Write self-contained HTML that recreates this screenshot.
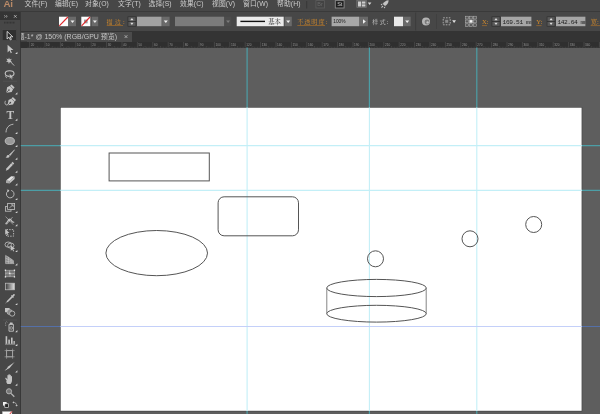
<!DOCTYPE html>
<html lang="zh-CN">
<head>
<meta charset="utf-8">
<title>Adobe Illustrator</title>
<style>
html,body{margin:0;padding:0;}
body{width:600px;height:414px;overflow:hidden;position:relative;background:#5e5e5e;
 font-family:"Liberation Sans","Noto Sans CJK SC",sans-serif;color:#d0d0d0;}
.abs{position:absolute;}
#menubar{left:0;top:0;width:600px;height:12px;background:#474747;will-change:transform;}
#menubar .mi{position:absolute;top:-1px;height:11px;line-height:10px;font-size:6.8px;color:#cdcdcd;white-space:nowrap;letter-spacing:0.1px;}
#menuline{left:0;top:11px;width:600px;height:1.3px;background:#3a3a3a;}
#ctrl{left:20px;top:12px;width:580px;height:19.5px;background:#474747;}
#tools{left:0;top:12px;width:20px;height:402px;background:#474747;}
#toolhead{left:0;top:12px;width:20px;height:7.5px;background:#343434;}
#toolsep{left:19.6px;top:12px;width:1.2px;height:402px;background:#383838;}
#tabbar{left:20.5px;top:31px;width:579.5px;height:10.5px;background:#343434;}
#tab{left:20.5px;top:31.7px;width:110.8px;height:9.5px;background:#4b4b4b;overflow:hidden;will-change:transform;}
#tab span{position:absolute;left:-3.5px;top:-0.3px;font-size:7px;line-height:10px;color:#c4c4c4;white-space:nowrap;}
#ruler{left:20.5px;top:41.6px;width:579.5px;height:6.1px;background:#2f2f2f;}
svg{position:absolute;left:0;top:0;will-change:transform;}
</style>
</head>
<body>
<div id="menubar" class="abs">
 <span class="mi" style="left:24.5px">文件(F)</span>
 <span class="mi" style="left:55px">编辑(E)</span>
 <span class="mi" style="left:85px">对象(O)</span>
 <span class="mi" style="left:118px">文字(T)</span>
 <span class="mi" style="left:148.5px">选择(S)</span>
 <span class="mi" style="left:180px">效果(C)</span>
 <span class="mi" style="left:212px">视图(V)</span>
 <span class="mi" style="left:243px">窗口(W)</span>
 <span class="mi" style="left:277px">帮助(H)</span>
 <span class="abs" style="left:3.4px;top:-1.6px;font-size:9.8px;line-height:11px;font-weight:bold;color:#b98a68;letter-spacing:-0.2px">Ai</span>
</div>
<div id="menuline" class="abs"></div>
<div id="ctrl" class="abs"></div>
<div id="tools" class="abs"></div>
<div id="toolhead" class="abs"></div>
<div id="toolsep" class="abs"></div>
<div id="tabbar" class="abs"></div>
<div id="tab" class="abs"><span>题-1* @ 150% (RGB/GPU 预览)</span></div>
<div id="ruler" class="abs"></div>
<svg id="ctrlsvg" width="600" height="48" viewBox="0 0 600 48" font-family="'Liberation Sans','Noto Sans CJK SC',sans-serif">
<line x1="306.7" y1="1" x2="306.7" y2="8.5" stroke="#383838" stroke-width="1"/>
<rect x="315.9" y="0.6" width="8.6" height="7.4" fill="#434343" stroke="#5e5e5e" stroke-width="0.8"/><text x="317.3" y="6.3" font-size="5.5" fill="#6a6a6a">Br</text>
<rect x="335.3" y="0.6" width="8.8" height="7.4" fill="#1f1f1f" stroke="#8c8c8c" stroke-width="0.9"/><text x="337.2" y="6.3" font-size="5.5" fill="#cfcfcf">St</text>
<rect x="356.8" y="0.4" width="9.6" height="7.2" fill="#5a5a5a" stroke="#7a7a7a" stroke-width="0.6"/><rect x="358" y="1.5" width="3.2" height="5" fill="#cdcdcd"/><rect x="362" y="1.5" width="3.4" height="2.1" fill="#cdcdcd"/><rect x="362" y="4.4" width="3.4" height="2.1" fill="#cdcdcd"/>
<path d="M367.8 2.6h3.6l-1.8 2.4z" fill="#d8d8d8"/>
<g fill="#c4c4c4"><path d="M388.6 0.2c-2.6 0.2-4.6 1.6-5.8 3.8l2.2 2.1c2.2-1.2 3.5-3.2 3.6-5.9z"/><path d="M382.6 3.6l-2 0.6 1.2 1.2z"/><path d="M385.4 6.4l-0.5 2 -1.3-1.2z"/><path d="M382.2 5.6l1.2 1.2-2.4 1.4z"/></g>
<rect x="59" y="16.7" width="9.2" height="9.5" fill="#fdfdfd"/><line x1="59.3" y1="25.9" x2="67.9" y2="17" stroke="#e0262a" stroke-width="1.1"/>
<rect x="69" y="16.7" width="7" height="9.5" fill="#6a6a6a"/><path d="M70.5 20.4h4l-2 2.6z" fill="#f0f0f0"/>
<rect x="81.3" y="16.7" width="9" height="9.5" fill="#fdfdfd"/><rect x="84" y="19.6" width="3.6" height="3.7" fill="#9a9a9a"/><line x1="81.6" y1="25.9" x2="90" y2="17" stroke="#e0262a" stroke-width="1.1"/>
<rect x="91.6" y="16.7" width="6.6" height="9.5" fill="#6a6a6a"/><path d="M92.9 20.4h4l-2 2.6z" fill="#f0f0f0"/>
<text x="106.5" y="24" font-size="6.1" fill="#d28a2c" font-family="'Liberation Serif','Noto Serif CJK SC',serif" textLength="18.2" lengthAdjust="spacing">描边:</text>
<line x1="106.7" y1="25.5" x2="123" y2="25.5" stroke="#b87624" stroke-width="0.6"/>
<rect x="127.6" y="16.5" width="8.7" height="10" fill="#2e2e2e"/><rect x="128.3" y="17.1" width="7.3" height="4" fill="#595959"/><rect x="128.3" y="21.9" width="7.3" height="4" fill="#595959"/><path d="M130.3 20.2h3.2l-1.6-2.2z" fill="#e0e0e0"/><path d="M130.3 22.8h3.2l-1.6 2.2z" fill="#e0e0e0"/>
<rect x="137" y="16.7" width="24.6" height="9.5" fill="#a2a2a2"/>
<rect x="162.1" y="16.7" width="7.5" height="9.5" fill="#6a6a6a"/><path d="M163.8 20.4h4l-2 2.6z" fill="#f0f0f0"/>
<rect x="175" y="16.7" width="49.2" height="9.5" fill="#7b7b7b"/>
<rect x="224.8" y="16.7" width="6.6" height="9.5" fill="#4c4c4c"/><path d="M226.1 20.4h4l-2 2.6z" fill="#7c7c7c"/>
<rect x="236.7" y="16.7" width="47" height="9.5" fill="#ebebeb"/><line x1="240.4" y1="21.4" x2="265" y2="21.4" stroke="#111" stroke-width="1.4"/><text x="268.2" y="23.9" font-size="6.4" fill="#333" font-family="'Liberation Serif','Noto Serif CJK SC',serif">基本</text>
<rect x="284.6" y="16.7" width="7.2" height="9.5" fill="#6a6a6a"/><path d="M286.2 20.4h4l-2 2.6z" fill="#f0f0f0"/>
<text x="297.2" y="24" font-size="6.2" fill="#d28a2c" font-family="'Liberation Serif','Noto Serif CJK SC',serif" textLength="30" lengthAdjust="spacing">不透明度:</text>
<line x1="297.3" y1="25.5" x2="325" y2="25.5" stroke="#b87624" stroke-width="0.6"/>
<rect x="331.6" y="16.7" width="27.8" height="9.5" fill="#a8a8a8"/><text x="333.2" y="23.3" font-size="6.2" fill="#222" textLength="12.4" lengthAdjust="spacingAndGlyphs">100%</text>
<rect x="360" y="16.7" width="8" height="9.5" fill="#6a6a6a"/><path d="M363 19.3v4.4l2.8-2.2z" fill="#f0f0f0"/>
<text x="372" y="24" font-size="6.2" fill="#c8c8c8" font-family="'Liberation Serif','Noto Serif CJK SC',serif" textLength="16.5" lengthAdjust="spacing">样式:</text>
<rect x="394" y="16.7" width="9.2" height="9.5" fill="#e8e8e8"/>
<rect x="403.7" y="16.7" width="7" height="9.5" fill="#6a6a6a"/><path d="M405.2 20.4h4l-2 2.6z" fill="#f0f0f0"/>
<line x1="415.6" y1="12.5" x2="415.6" y2="30.5" stroke="#3c3c3c" stroke-width="0.9"/>
<circle cx="426" cy="21.4" r="4" fill="#b4b4b4"/><circle cx="427" cy="22" r="2.4" fill="#7a7a7a"/><circle cx="427.6" cy="22.4" r="1.2" fill="#c0c0c0"/>
<line x1="436.5" y1="14" x2="436.5" y2="29" stroke="#3f3f3f" stroke-width="0.8"/>
<rect x="443.2" y="17.8" width="7" height="7" fill="#4a4a4a" stroke="#b4b4b4" stroke-width="0.9" stroke-dasharray="1.6 1.2"/><rect x="445.2" y="19.8" width="3" height="3" fill="#8a8a8a"/><path d="M452.2 20.3h3.8l-1.9 2.6z" fill="#e0e0e0"/>
<rect x="465.3" y="16" width="11.4" height="10.7" fill="#505050"/><rect x="465.4" y="16.2" width="3" height="2.8" fill="#5a5a5a" stroke="#b8b8b8" stroke-width="0.5"/><rect x="465.4" y="20.0" width="3" height="2.8" fill="#5a5a5a" stroke="#b8b8b8" stroke-width="0.5"/><rect x="465.4" y="23.8" width="3" height="2.8" fill="#5a5a5a" stroke="#b8b8b8" stroke-width="0.5"/><rect x="469.5" y="16.2" width="3" height="2.8" fill="#5a5a5a" stroke="#b8b8b8" stroke-width="0.5"/><rect x="469.5" y="20.0" width="3" height="2.8" fill="#f4f4f4" stroke="#b8b8b8" stroke-width="0.5"/><rect x="469.5" y="23.8" width="3" height="2.8" fill="#5a5a5a" stroke="#b8b8b8" stroke-width="0.5"/><rect x="473.6" y="16.2" width="3" height="2.8" fill="#5a5a5a" stroke="#b8b8b8" stroke-width="0.5"/><rect x="473.6" y="20.0" width="3" height="2.8" fill="#5a5a5a" stroke="#b8b8b8" stroke-width="0.5"/><rect x="473.6" y="23.8" width="3" height="2.8" fill="#5a5a5a" stroke="#b8b8b8" stroke-width="0.5"/>
<text x="482" y="24.3" font-size="6.6" fill="#d28a2c" font-family="'Liberation Serif','Noto Serif CJK SC',serif">X:</text><line x1="482" y1="25.6" x2="487" y2="25.6" stroke="#b87624" stroke-width="0.6"/>
<rect x="491.6" y="16.5" width="8.8" height="10" fill="#2e2e2e"/><rect x="492.3" y="17.1" width="7.4" height="4" fill="#595959"/><rect x="492.3" y="21.9" width="7.4" height="4" fill="#595959"/><path d="M494.4 20.2h3.2l-1.6-2.2z" fill="#e0e0e0"/><path d="M494.4 22.8h3.2l-1.6 2.2z" fill="#e0e0e0"/>
<rect x="501" y="16.7" width="30.4" height="9.5" fill="#a6a6a6"/><svg x="501" y="16.7" width="30.4" height="9.5" style="will-change:auto;position:static"><text x="1.6" y="6.9" font-size="6.2" fill="#1c1c1c" font-family="'Liberation Mono',monospace" textLength="30.6" lengthAdjust="spacing">169.51 mm</text></svg>
<text x="536.3" y="24.3" font-size="6.6" fill="#d28a2c" font-family="'Liberation Serif','Noto Serif CJK SC',serif">Y:</text><line x1="536.3" y1="25.6" x2="541.5" y2="25.6" stroke="#b87624" stroke-width="0.6"/>
<rect x="546.7" y="16.5" width="8.7" height="10" fill="#2e2e2e"/><rect x="547.4" y="17.1" width="7.3" height="4" fill="#595959"/><rect x="547.4" y="21.9" width="7.3" height="4" fill="#595959"/><path d="M549.5 20.2h3.2l-1.6-2.2z" fill="#e0e0e0"/><path d="M549.5 22.8h3.2l-1.6 2.2z" fill="#e0e0e0"/>
<rect x="556" y="16.7" width="29.4" height="9.5" fill="#a6a6a6"/><svg x="556" y="16.7" width="29.4" height="9.5" style="will-change:auto;position:static"><text x="1.4" y="6.9" font-size="6.2" fill="#1c1c1c" font-family="'Liberation Mono',monospace" textLength="30.2" lengthAdjust="spacing">142.64 mm</text></svg>
<text x="590.7" y="24" font-size="6.4" fill="#d28a2c" font-family="'Liberation Serif','Noto Serif CJK SC',serif">宽:</text><line x1="590.7" y1="25.6" x2="600" y2="25.6" stroke="#b87624" stroke-width="0.6"/>
<path d="M124.6 35.2l2.8 2.8M127.4 35.2l-2.8 2.8" stroke="#c8c8c8" stroke-width="0.7"/>
<path d="M4.2 15.3l1.3 1.1-1.3 1.1M6 15.3l1.3 1.1-1.3 1.1" stroke="#c8c8c8" stroke-width="0.6" fill="none"/><path d="M14 15.1l2.6 2.6M16.6 15.1l-2.6 2.6" stroke="#d0d0d0" stroke-width="0.7"/>
<line x1="4" y1="22.6" x2="15" y2="22.6" stroke="#353535" stroke-width="1.6" stroke-dasharray="1 0.5"/>
<path d="M29.6 42v5.7M45.0 42v5.7M60.4 42v5.7M75.8 42v5.7M91.2 42v5.7M106.6 42v5.7M122.0 42v5.7M137.4 42v5.7M152.8 42v5.7M168.2 42v5.7M183.6 42v5.7M199.0 42v5.7M214.4 42v5.7M229.8 42v5.7M245.2 42v5.7M260.6 42v5.7M276.0 42v5.7M291.4 42v5.7M306.8 42v5.7M322.2 42v5.7M337.6 42v5.7M353.0 42v5.7M368.4 42v5.7M383.8 42v5.7M399.2 42v5.7M414.6 42v5.7M430.0 42v5.7M445.4 42v5.7M460.8 42v5.7M476.2 42v5.7M491.6 42v5.7M507.0 42v5.7M522.4 42v5.7M537.8 42v5.7M553.2 42v5.7M568.6 42v5.7M584.0 42v5.7M599.4 42v5.7" stroke="#5c5c5c" stroke-width="0.5" fill="none"/><path d="M28.06 46.800000000000004v0.9M31.14 46.800000000000004v0.9M32.68 46.800000000000004v0.9M34.22 46.800000000000004v0.9M35.76 46.800000000000004v0.9M37.30 46.2v1.5M38.84 46.800000000000004v0.9M40.38 46.800000000000004v0.9M41.92 46.800000000000004v0.9M43.46 46.800000000000004v0.9M46.54 46.800000000000004v0.9M48.08 46.800000000000004v0.9M49.62 46.800000000000004v0.9M51.16 46.800000000000004v0.9M52.70 46.2v1.5M54.24 46.800000000000004v0.9M55.78 46.800000000000004v0.9M57.32 46.800000000000004v0.9M58.86 46.800000000000004v0.9M61.94 46.800000000000004v0.9M63.48 46.800000000000004v0.9M65.02 46.800000000000004v0.9M66.56 46.800000000000004v0.9M68.10 46.2v1.5M69.64 46.800000000000004v0.9M71.18 46.800000000000004v0.9M72.72 46.800000000000004v0.9M74.26 46.800000000000004v0.9M77.34 46.800000000000004v0.9M78.88 46.800000000000004v0.9M80.42 46.800000000000004v0.9M81.96 46.800000000000004v0.9M83.50 46.2v1.5M85.04 46.800000000000004v0.9M86.58 46.800000000000004v0.9M88.12 46.800000000000004v0.9M89.66 46.800000000000004v0.9M92.74 46.800000000000004v0.9M94.28 46.800000000000004v0.9M95.82 46.800000000000004v0.9M97.36 46.800000000000004v0.9M98.90 46.2v1.5M100.44 46.800000000000004v0.9M101.98 46.800000000000004v0.9M103.52 46.800000000000004v0.9M105.06 46.800000000000004v0.9M108.14 46.800000000000004v0.9M109.68 46.800000000000004v0.9M111.22 46.800000000000004v0.9M112.76 46.800000000000004v0.9M114.30 46.2v1.5M115.84 46.800000000000004v0.9M117.38 46.800000000000004v0.9M118.92 46.800000000000004v0.9M120.46 46.800000000000004v0.9M123.54 46.800000000000004v0.9M125.08 46.800000000000004v0.9M126.62 46.800000000000004v0.9M128.16 46.800000000000004v0.9M129.70 46.2v1.5M131.24 46.800000000000004v0.9M132.78 46.800000000000004v0.9M134.32 46.800000000000004v0.9M135.86 46.800000000000004v0.9M138.94 46.800000000000004v0.9M140.48 46.800000000000004v0.9M142.02 46.800000000000004v0.9M143.56 46.800000000000004v0.9M145.10 46.2v1.5M146.64 46.800000000000004v0.9M148.18 46.800000000000004v0.9M149.72 46.800000000000004v0.9M151.26 46.800000000000004v0.9M154.34 46.800000000000004v0.9M155.88 46.800000000000004v0.9M157.42 46.800000000000004v0.9M158.96 46.800000000000004v0.9M160.50 46.2v1.5M162.04 46.800000000000004v0.9M163.58 46.800000000000004v0.9M165.12 46.800000000000004v0.9M166.66 46.800000000000004v0.9M169.74 46.800000000000004v0.9M171.28 46.800000000000004v0.9M172.82 46.800000000000004v0.9M174.36 46.800000000000004v0.9M175.90 46.2v1.5M177.44 46.800000000000004v0.9M178.98 46.800000000000004v0.9M180.52 46.800000000000004v0.9M182.06 46.800000000000004v0.9M185.14 46.800000000000004v0.9M186.68 46.800000000000004v0.9M188.22 46.800000000000004v0.9M189.76 46.800000000000004v0.9M191.30 46.2v1.5M192.84 46.800000000000004v0.9M194.38 46.800000000000004v0.9M195.92 46.800000000000004v0.9M197.46 46.800000000000004v0.9M200.54 46.800000000000004v0.9M202.08 46.800000000000004v0.9M203.62 46.800000000000004v0.9M205.16 46.800000000000004v0.9M206.70 46.2v1.5M208.24 46.800000000000004v0.9M209.78 46.800000000000004v0.9M211.32 46.800000000000004v0.9M212.86 46.800000000000004v0.9M215.94 46.800000000000004v0.9M217.48 46.800000000000004v0.9M219.02 46.800000000000004v0.9M220.56 46.800000000000004v0.9M222.10 46.2v1.5M223.64 46.800000000000004v0.9M225.18 46.800000000000004v0.9M226.72 46.800000000000004v0.9M228.26 46.800000000000004v0.9M231.34 46.800000000000004v0.9M232.88 46.800000000000004v0.9M234.42 46.800000000000004v0.9M235.96 46.800000000000004v0.9M237.50 46.2v1.5M239.04 46.800000000000004v0.9M240.58 46.800000000000004v0.9M242.12 46.800000000000004v0.9M243.66 46.800000000000004v0.9M246.74 46.800000000000004v0.9M248.28 46.800000000000004v0.9M249.82 46.800000000000004v0.9M251.36 46.800000000000004v0.9M252.90 46.2v1.5M254.44 46.800000000000004v0.9M255.98 46.800000000000004v0.9M257.52 46.800000000000004v0.9M259.06 46.800000000000004v0.9M262.14 46.800000000000004v0.9M263.68 46.800000000000004v0.9M265.22 46.800000000000004v0.9M266.76 46.800000000000004v0.9M268.30 46.2v1.5M269.84 46.800000000000004v0.9M271.38 46.800000000000004v0.9M272.92 46.800000000000004v0.9M274.46 46.800000000000004v0.9M277.54 46.800000000000004v0.9M279.08 46.800000000000004v0.9M280.62 46.800000000000004v0.9M282.16 46.800000000000004v0.9M283.70 46.2v1.5M285.24 46.800000000000004v0.9M286.78 46.800000000000004v0.9M288.32 46.800000000000004v0.9M289.86 46.800000000000004v0.9M292.94 46.800000000000004v0.9M294.48 46.800000000000004v0.9M296.02 46.800000000000004v0.9M297.56 46.800000000000004v0.9M299.10 46.2v1.5M300.64 46.800000000000004v0.9M302.18 46.800000000000004v0.9M303.72 46.800000000000004v0.9M305.26 46.800000000000004v0.9M308.34 46.800000000000004v0.9M309.88 46.800000000000004v0.9M311.42 46.800000000000004v0.9M312.96 46.800000000000004v0.9M314.50 46.2v1.5M316.04 46.800000000000004v0.9M317.58 46.800000000000004v0.9M319.12 46.800000000000004v0.9M320.66 46.800000000000004v0.9M323.74 46.800000000000004v0.9M325.28 46.800000000000004v0.9M326.82 46.800000000000004v0.9M328.36 46.800000000000004v0.9M329.90 46.2v1.5M331.44 46.800000000000004v0.9M332.98 46.800000000000004v0.9M334.52 46.800000000000004v0.9M336.06 46.800000000000004v0.9M339.14 46.800000000000004v0.9M340.68 46.800000000000004v0.9M342.22 46.800000000000004v0.9M343.76 46.800000000000004v0.9M345.30 46.2v1.5M346.84 46.800000000000004v0.9M348.38 46.800000000000004v0.9M349.92 46.800000000000004v0.9M351.46 46.800000000000004v0.9M354.54 46.800000000000004v0.9M356.08 46.800000000000004v0.9M357.62 46.800000000000004v0.9M359.16 46.800000000000004v0.9M360.70 46.2v1.5M362.24 46.800000000000004v0.9M363.78 46.800000000000004v0.9M365.32 46.800000000000004v0.9M366.86 46.800000000000004v0.9M369.94 46.800000000000004v0.9M371.48 46.800000000000004v0.9M373.02 46.800000000000004v0.9M374.56 46.800000000000004v0.9M376.10 46.2v1.5M377.64 46.800000000000004v0.9M379.18 46.800000000000004v0.9M380.72 46.800000000000004v0.9M382.26 46.800000000000004v0.9M385.34 46.800000000000004v0.9M386.88 46.800000000000004v0.9M388.42 46.800000000000004v0.9M389.96 46.800000000000004v0.9M391.50 46.2v1.5M393.04 46.800000000000004v0.9M394.58 46.800000000000004v0.9M396.12 46.800000000000004v0.9M397.66 46.800000000000004v0.9M400.74 46.800000000000004v0.9M402.28 46.800000000000004v0.9M403.82 46.800000000000004v0.9M405.36 46.800000000000004v0.9M406.90 46.2v1.5M408.44 46.800000000000004v0.9M409.98 46.800000000000004v0.9M411.52 46.800000000000004v0.9M413.06 46.800000000000004v0.9M416.14 46.800000000000004v0.9M417.68 46.800000000000004v0.9M419.22 46.800000000000004v0.9M420.76 46.800000000000004v0.9M422.30 46.2v1.5M423.84 46.800000000000004v0.9M425.38 46.800000000000004v0.9M426.92 46.800000000000004v0.9M428.46 46.800000000000004v0.9M431.54 46.800000000000004v0.9M433.08 46.800000000000004v0.9M434.62 46.800000000000004v0.9M436.16 46.800000000000004v0.9M437.70 46.2v1.5M439.24 46.800000000000004v0.9M440.78 46.800000000000004v0.9M442.32 46.800000000000004v0.9M443.86 46.800000000000004v0.9M446.94 46.800000000000004v0.9M448.48 46.800000000000004v0.9M450.02 46.800000000000004v0.9M451.56 46.800000000000004v0.9M453.10 46.2v1.5M454.64 46.800000000000004v0.9M456.18 46.800000000000004v0.9M457.72 46.800000000000004v0.9M459.26 46.800000000000004v0.9M462.34 46.800000000000004v0.9M463.88 46.800000000000004v0.9M465.42 46.800000000000004v0.9M466.96 46.800000000000004v0.9M468.50 46.2v1.5M470.04 46.800000000000004v0.9M471.58 46.800000000000004v0.9M473.12 46.800000000000004v0.9M474.66 46.800000000000004v0.9M477.74 46.800000000000004v0.9M479.28 46.800000000000004v0.9M480.82 46.800000000000004v0.9M482.36 46.800000000000004v0.9M483.90 46.2v1.5M485.44 46.800000000000004v0.9M486.98 46.800000000000004v0.9M488.52 46.800000000000004v0.9M490.06 46.800000000000004v0.9M493.14 46.800000000000004v0.9M494.68 46.800000000000004v0.9M496.22 46.800000000000004v0.9M497.76 46.800000000000004v0.9M499.30 46.2v1.5M500.84 46.800000000000004v0.9M502.38 46.800000000000004v0.9M503.92 46.800000000000004v0.9M505.46 46.800000000000004v0.9M508.54 46.800000000000004v0.9M510.08 46.800000000000004v0.9M511.62 46.800000000000004v0.9M513.16 46.800000000000004v0.9M514.70 46.2v1.5M516.24 46.800000000000004v0.9M517.78 46.800000000000004v0.9M519.32 46.800000000000004v0.9M520.86 46.800000000000004v0.9M523.94 46.800000000000004v0.9M525.48 46.800000000000004v0.9M527.02 46.800000000000004v0.9M528.56 46.800000000000004v0.9M530.10 46.2v1.5M531.64 46.800000000000004v0.9M533.18 46.800000000000004v0.9M534.72 46.800000000000004v0.9M536.26 46.800000000000004v0.9M539.34 46.800000000000004v0.9M540.88 46.800000000000004v0.9M542.42 46.800000000000004v0.9M543.96 46.800000000000004v0.9M545.50 46.2v1.5M547.04 46.800000000000004v0.9M548.58 46.800000000000004v0.9M550.12 46.800000000000004v0.9M551.66 46.800000000000004v0.9M554.74 46.800000000000004v0.9M556.28 46.800000000000004v0.9M557.82 46.800000000000004v0.9M559.36 46.800000000000004v0.9M560.90 46.2v1.5M562.44 46.800000000000004v0.9M563.98 46.800000000000004v0.9M565.52 46.800000000000004v0.9M567.06 46.800000000000004v0.9M570.14 46.800000000000004v0.9M571.68 46.800000000000004v0.9M573.22 46.800000000000004v0.9M574.76 46.800000000000004v0.9M576.30 46.2v1.5M577.84 46.800000000000004v0.9M579.38 46.800000000000004v0.9M580.92 46.800000000000004v0.9M582.46 46.800000000000004v0.9M585.54 46.800000000000004v0.9M587.08 46.800000000000004v0.9M588.62 46.800000000000004v0.9M590.16 46.800000000000004v0.9M591.70 46.2v1.5M593.24 46.800000000000004v0.9M594.78 46.800000000000004v0.9M596.32 46.800000000000004v0.9M597.86 46.800000000000004v0.9" stroke="#5a5a5a" stroke-width="0.5" fill="none"/><text x="30.7" y="46.1" font-size="4" fill="#949494" textLength="3.50" lengthAdjust="spacingAndGlyphs">20</text><text x="46.1" y="46.1" font-size="4" fill="#949494" textLength="3.50" lengthAdjust="spacingAndGlyphs">10</text><text x="61.5" y="46.1" font-size="4" fill="#949494" textLength="1.75" lengthAdjust="spacingAndGlyphs">0</text><text x="76.9" y="46.1" font-size="4" fill="#949494" textLength="3.50" lengthAdjust="spacingAndGlyphs">10</text><text x="92.3" y="46.1" font-size="4" fill="#949494" textLength="3.50" lengthAdjust="spacingAndGlyphs">20</text><text x="107.7" y="46.1" font-size="4" fill="#949494" textLength="3.50" lengthAdjust="spacingAndGlyphs">30</text><text x="123.1" y="46.1" font-size="4" fill="#949494" textLength="3.50" lengthAdjust="spacingAndGlyphs">40</text><text x="138.5" y="46.1" font-size="4" fill="#949494" textLength="3.50" lengthAdjust="spacingAndGlyphs">50</text><text x="153.9" y="46.1" font-size="4" fill="#949494" textLength="3.50" lengthAdjust="spacingAndGlyphs">60</text><text x="169.3" y="46.1" font-size="4" fill="#949494" textLength="3.50" lengthAdjust="spacingAndGlyphs">70</text><text x="184.7" y="46.1" font-size="4" fill="#949494" textLength="3.50" lengthAdjust="spacingAndGlyphs">80</text><text x="200.1" y="46.1" font-size="4" fill="#949494" textLength="3.50" lengthAdjust="spacingAndGlyphs">90</text><text x="215.5" y="46.1" font-size="4" fill="#949494" textLength="5.25" lengthAdjust="spacingAndGlyphs">100</text><text x="230.9" y="46.1" font-size="4" fill="#949494" textLength="5.25" lengthAdjust="spacingAndGlyphs">110</text><text x="246.3" y="46.1" font-size="4" fill="#949494" textLength="5.25" lengthAdjust="spacingAndGlyphs">120</text><text x="261.7" y="46.1" font-size="4" fill="#949494" textLength="5.25" lengthAdjust="spacingAndGlyphs">130</text><text x="277.1" y="46.1" font-size="4" fill="#949494" textLength="5.25" lengthAdjust="spacingAndGlyphs">140</text><text x="292.5" y="46.1" font-size="4" fill="#949494" textLength="5.25" lengthAdjust="spacingAndGlyphs">150</text><text x="307.9" y="46.1" font-size="4" fill="#949494" textLength="5.25" lengthAdjust="spacingAndGlyphs">160</text><text x="323.3" y="46.1" font-size="4" fill="#949494" textLength="5.25" lengthAdjust="spacingAndGlyphs">170</text><text x="338.7" y="46.1" font-size="4" fill="#949494" textLength="5.25" lengthAdjust="spacingAndGlyphs">180</text><text x="354.1" y="46.1" font-size="4" fill="#949494" textLength="5.25" lengthAdjust="spacingAndGlyphs">190</text><text x="369.5" y="46.1" font-size="4" fill="#949494" textLength="5.25" lengthAdjust="spacingAndGlyphs">200</text><text x="384.9" y="46.1" font-size="4" fill="#949494" textLength="5.25" lengthAdjust="spacingAndGlyphs">210</text><text x="400.3" y="46.1" font-size="4" fill="#949494" textLength="5.25" lengthAdjust="spacingAndGlyphs">220</text><text x="415.7" y="46.1" font-size="4" fill="#949494" textLength="5.25" lengthAdjust="spacingAndGlyphs">230</text><text x="431.1" y="46.1" font-size="4" fill="#949494" textLength="5.25" lengthAdjust="spacingAndGlyphs">240</text><text x="446.5" y="46.1" font-size="4" fill="#949494" textLength="5.25" lengthAdjust="spacingAndGlyphs">250</text><text x="461.9" y="46.1" font-size="4" fill="#949494" textLength="5.25" lengthAdjust="spacingAndGlyphs">260</text><text x="477.3" y="46.1" font-size="4" fill="#949494" textLength="5.25" lengthAdjust="spacingAndGlyphs">270</text><text x="492.7" y="46.1" font-size="4" fill="#949494" textLength="5.25" lengthAdjust="spacingAndGlyphs">280</text><text x="508.1" y="46.1" font-size="4" fill="#949494" textLength="5.25" lengthAdjust="spacingAndGlyphs">290</text><text x="523.5" y="46.1" font-size="4" fill="#949494" textLength="5.25" lengthAdjust="spacingAndGlyphs">300</text><text x="538.9" y="46.1" font-size="4" fill="#949494" textLength="5.25" lengthAdjust="spacingAndGlyphs">310</text><text x="554.3" y="46.1" font-size="4" fill="#949494" textLength="5.25" lengthAdjust="spacingAndGlyphs">320</text><text x="569.7" y="46.1" font-size="4" fill="#949494" textLength="5.25" lengthAdjust="spacingAndGlyphs">330</text><text x="585.1" y="46.1" font-size="4" fill="#949494" textLength="5.25" lengthAdjust="spacingAndGlyphs">340</text><text x="600.5" y="46.1" font-size="4" fill="#949494" textLength="5.25" lengthAdjust="spacingAndGlyphs">350</text>
<rect x="20.5" y="41.6" width="6.5" height="6.1" fill="#2f2f2f"/>
</svg>
<svg id="toolsvg" width="21" height="414" viewBox="0 0 21 414">
<rect x="2.2" y="29.8" width="14.4" height="10.8" fill="#303030" stroke="#525252" stroke-width="0.5"/>
<path d="M7.1 31.4v7.6l1.9-1.8 1.3 2.7 1.1-0.5-1.3-2.6h2.7z" fill="#2a2a2a" stroke="#f0f0f0" stroke-width="0.8" stroke-linejoin="miter"/>
<path d="M7.6 44.8v7.6l1.9-1.8 1.3 2.6 1.1-0.5-1.2-2.6h2.7z" fill="#c4c4c4"/><path d="M17.4 51.8v2.2h-2.2z" fill="#d8d8d8"/>
<path d="M9 57.4l0.8 2 2.1-0.6-1.3 1.8 1.4 1.7-2.2-0.4-0.9 2-0.7-2.1-2.2 0.3 1.5-1.6-1.2-1.9 2.1 0.7z" fill="#c4c4c4"/><path d="M10.2 61.4l4 4.2" stroke="#c4c4c4" stroke-width="0.9"/>
<ellipse cx="9.6" cy="73.6" rx="4.4" ry="2.8" fill="none" stroke="#c4c4c4" stroke-width="1.1"/><path d="M6.2 75.2c-0.8 1-0.6 2 0.6 2.6" stroke="#c4c4c4" stroke-width="0.9" fill="none"/><path d="M9.6 73.8v5.2l1.3-1.2 0.9 1.8 0.8-0.4-0.9-1.8h1.9z" fill="#c4c4c4" stroke="#474747" stroke-width="0.3"/>
<line x1="3" y1="81.2" x2="17" y2="81.2" stroke="#5a5a5a" stroke-width="0.6"/>
<g transform="translate(9.8 89.2) rotate(45)"><path d="M-2.2 -4.6h4.4v2l1 3.2-3.2 4.4-3.2-4.4 1-3.2z" fill="#c4c4c4"/><path d="M0 5v-3.4" stroke="#474747" stroke-width="0.7"/><circle cx="0" cy="1.2" r="0.8" fill="#474747"/><path d="M-2.4 -2.5h4.8" stroke="#474747" stroke-width="0.5"/></g><path d="M17.4 92.2v2.2h-2.2z" fill="#d8d8d8"/>
<g transform="translate(11.2 101.8) rotate(45)"><path d="M-2.2 -4.6h4.4v2l1 3.2-3.2 4.4-3.2-4.4 1-3.2z" fill="#c4c4c4"/><path d="M0 5v-3.4" stroke="#474747" stroke-width="0.7"/><circle cx="0" cy="1.2" r="0.8" fill="#474747"/><path d="M-2.4 -2.5h4.8" stroke="#474747" stroke-width="0.5"/></g><path d="M5.4 100.8c-1.2 2.6 0.2 4.6 1.6 4.2 1.4-0.4 0.6-2.2 2.2-1.6" stroke="#c4c4c4" stroke-width="0.8" fill="none"/>
<text x="6.4" y="118.8" font-size="11.5" font-family="'Liberation Serif',serif" font-weight="bold" fill="#c4c4c4">T</text><path d="M17.4 118.5v2.2h-2.2z" fill="#d8d8d8"/>
<path d="M6 132.4c0.2-4.8 2.8-7.6 7.4-8.2" stroke="#c4c4c4" stroke-width="0.9" fill="none"/><path d="M17.4 131.7v2.2h-2.2z" fill="#d8d8d8"/>
<ellipse cx="9.8" cy="141" rx="4.6" ry="3.5" fill="#999" stroke="#c4c4c4" stroke-width="0.9"/><path d="M17.4 144.7v2.2h-2.2z" fill="#d8d8d8"/>
<path d="M14.6 149.8l-5.4 5 0.9 0.9z" fill="#c4c4c4" stroke="#c4c4c4" stroke-width="0.5"/><path d="M9 155.2c-0.9-0.6-2.2 0-2.4 1.2-0.1 0.6-0.6 0.9-1.2 1 1.6 0.8 3.8 0.4 4.2-1z" fill="#c4c4c4"/><path d="M17.4 157.5v2.2h-2.2z" fill="#d8d8d8"/>
<path d="M12.6 161.8l1.6 1.6-6 6.4-2.4 0.9 0.8-2.5z" fill="#c4c4c4"/><path d="M11.4 163.2l1.6 1.6" stroke="#474747" stroke-width="0.5"/><path d="M17.4 170.5v2.2h-2.2z" fill="#d8d8d8"/>
<path d="M6 180.6l5.2-4.4 3.4 0.4-5 4.4z" fill="#e4e4e4"/><path d="M6 180.6l3.6 0.4v2.6l-3.6-0.5z" fill="#a8a8a8"/><path d="M9.6 181l5-4.4v2.5l-5 4.5z" fill="#c4c4c4"/><path d="M17.4 183.3v2.2h-2.2z" fill="#d8d8d8"/>
<path d="M8 191a3.8 3.8 0 1 0 3.2-0.6" stroke="#c4c4c4" stroke-width="0.9" fill="none"/><path d="M6.8 189.6l2.6 0.4-1.2 2.2z" fill="#c4c4c4"/><path d="M17.4 197.9v2.2h-2.2z" fill="#d8d8d8"/>
<rect x="5.4" y="206.6" width="5.6" height="4.6" fill="none" stroke="#c4c4c4" stroke-width="0.8"/><rect x="7.6" y="203.4" width="7" height="6" fill="#474747" stroke="#c4c4c4" stroke-width="0.8"/><path d="M9.4 207.8l3.6-2.8M13.2 207v-2.2h-2.2" stroke="#c4c4c4" stroke-width="0.7" fill="none"/><path d="M17.4 210.9v2.2h-2.2z" fill="#d8d8d8"/>
<path d="M5.4 223.6c2.4-0.2 2.4-4.6 4.4-4.4s1.2 3.6 4.4 3" stroke="#c4c4c4" stroke-width="1.2" fill="none"/><path d="M5.6 216.6l7.6 8M12.6 217l-6 7.6" stroke="#c4c4c4" stroke-width="0.6"/><circle cx="9.2" cy="220.6" r="1" fill="#c4c4c4"/><path d="M17.4 224.1v2.2h-2.2z" fill="#d8d8d8"/>
<rect x="6.6" y="229.6" width="7" height="6.6" fill="none" stroke="#c4c4c4" stroke-width="0.9" stroke-dasharray="1.4 1.2"/><path d="M5.2 229v5.8l1.5-1.3 1 2 0.8-0.4-1-2h2z" fill="#c4c4c4"/>
<ellipse cx="8.2" cy="244.6" rx="3.2" ry="2.6" fill="none" stroke="#c4c4c4" stroke-width="0.8"/><ellipse cx="10.8" cy="245.6" rx="3.2" ry="2.6" fill="none" stroke="#c4c4c4" stroke-width="0.8"/><path d="M10.8 245.2v5.6l1.5-1.3 1 2 0.8-0.4-1-2h2z" fill="#c4c4c4"/><path d="M17.4 249.9v2.2h-2.2z" fill="#d8d8d8"/>
<path d="M5.6 255.4l3 1.6 4.8 3.4v3.2h-7.8z" fill="#8a8a8a"/><path d="M5.6 255.4v8.2M8.4 256.8v6.8M11 258.8v4.8M13.4 260.6v3M5.6 258.2l7.8 3.4M5.6 261l7.8 1.6M5.6 263.6h8.6M5.6 255.4l7.8 5.2" stroke="#c4c4c4" stroke-width="0.6" fill="none"/><path d="M17.4 263.3v2.2h-2.2z" fill="#d8d8d8"/>
<rect x="5.4" y="270.2" width="9" height="6.6" fill="#777" stroke="#aaa" stroke-width="0.6"/><path d="M5.4 273.4c3-1.2 6 1.2 9 0M9.8 270.2c-1 2.2 1 4.4 0 6.6" stroke="#c4c4c4" stroke-width="0.6" fill="none"/><g fill="#f0f0f0"><rect x="4.8" y="269.6" width="1.3" height="1.3"/><rect x="13.8" y="269.6" width="1.3" height="1.3"/><rect x="4.8" y="276.2" width="1.3" height="1.3"/><rect x="13.8" y="276.2" width="1.3" height="1.3"/><rect x="9.1" y="272.8" width="1.3" height="1.3"/></g>
<defs><linearGradient id="gr" x1="0" x2="1" y1="0" y2="0"><stop offset="0" stop-color="#3a3a3a"/><stop offset="1" stop-color="#e0e0e0"/></linearGradient></defs><rect x="5.4" y="283.2" width="9" height="6.6" fill="url(#gr)" stroke="#c4c4c4" stroke-width="0.7"/>
<path d="M13.4 294.2c0.9-0.9 2 0.3 1.2 1.2l-1.2 1.2 0.5 0.5-0.8 0.8-0.5-0.5-4.6 4.6-1.6 0.6-0.5 0.9-0.5-0.5 0.9-0.5 0.6-1.6 4.6-4.6-0.5-0.5 0.8-0.8 0.5 0.5z" fill="#c4c4c4"/><path d="M17.4 302.9v2.2h-2.2z" fill="#d8d8d8"/>
<rect x="5" y="308" width="4.6" height="4.2" fill="#c4c4c4"/><circle cx="9.6" cy="312" r="2.6" fill="#8c8c8c" stroke="#c4c4c4" stroke-width="0.6"/><circle cx="12.2" cy="313.6" r="2.6" fill="#474747" stroke="#c4c4c4" stroke-width="0.8"/>
<line x1="3" y1="320" x2="17" y2="320" stroke="#5a5a5a" stroke-width="0.6"/>
<path d="M9 324.4h4.4v6.8h-4.4z" fill="none" stroke="#c4c4c4" stroke-width="0.9"/><path d="M10 324.4v-1.6h2.4v1.6" fill="#c4c4c4" stroke="#c4c4c4" stroke-width="0.5"/><circle cx="11.2" cy="328" r="1.3" fill="none" stroke="#c4c4c4" stroke-width="0.7"/><path d="M5 322.8l0.9 0.5M5.2 325.2h1M6.6 321.6l0.5 0.8" stroke="#c4c4c4" stroke-width="0.7"/><path d="M17.4 330.0v2.2h-2.2z" fill="#d8d8d8"/>
<rect x="5.6" y="336.2" width="1.6" height="7.6" fill="#c4c4c4"/><rect x="8.3" y="339.6" width="1.6" height="4.2" fill="#c4c4c4"/><rect x="11" y="337.6" width="1.6" height="6.2" fill="#c4c4c4"/><rect x="13.5" y="341" width="1.3" height="2.8" fill="#c4c4c4"/><path d="M5 344.2h10.2" stroke="#c4c4c4" stroke-width="0.6"/><path d="M17.4 343.7v2.2h-2.2z" fill="#d8d8d8"/>
<rect x="6.6" y="350.6" width="6" height="6.2" fill="none" stroke="#b0b0b0" stroke-width="0.8"/><path d="M4.6 350.6h10M4.6 356.8h10M6.6 348.6v10.2M12.6 348.6v10.2" stroke="#a8a8a8" stroke-width="0.6"/>
<path d="M14.6 362l-6.4 4.6-2.6 3.6 4-2.2z" fill="#c4c4c4"/><path d="M5.4 370.4l1-1.2" stroke="#c4c4c4" stroke-width="0.8"/><path d="M17.4 370.3v2.2h-2.2z" fill="#d8d8d8"/>
<path d="M7 381.2l-1.6-2.4c-0.4-0.8 0.6-1.3 1.1-0.6l0.9 1.2v-3.8c0-0.8 1.1-0.8 1.1 0v-0.9c0-0.8 1.2-0.8 1.2 0v0.7c0-0.8 1.2-0.8 1.2 0v1c0-0.7 1.1-0.7 1.1 0v4.2c0 1.6-0.8 2.8-1.4 3.4h-3.2c-0.6-0.8-1-1.8-1.4-2.8z" fill="#c4c4c4"/><path d="M17.4 383.5v2.2h-2.2z" fill="#d8d8d8"/>
<circle cx="9" cy="391.3" r="2.6" fill="#777" stroke="#b8b8b8" stroke-width="0.9"/><path d="M11 393.4l3.3 3.3" stroke="#b8b8b8" stroke-width="1.3"/>
<rect x="3" y="402" width="3.6" height="3.6" fill="#f2f2f2"/><rect x="4.8" y="403.8" width="3.6" height="3.6" fill="#222" stroke="#f2f2f2" stroke-width="0.6"/><path d="M13.4 402.4c2 0 3.2 1.2 3.2 3.2" stroke="#c4c4c4" stroke-width="0.7" fill="none"/><path d="M14 401.2l-1.6 1.2 1.6 1.2z" fill="#c4c4c4"/><path d="M15.4 405l1.2 1.6 1.2-1.6z" fill="#c4c4c4"/>
<rect x="2.2" y="411.4" width="9.8" height="4" fill="#fdfdfd" stroke="#888" stroke-width="0.4"/><path d="M9.8 414l2.2-2.6" stroke="#e0262a" stroke-width="1"/>
</svg>
<svg id="canvas" width="600" height="414" viewBox="0 0 600 414">
<rect x="60.1" y="107.1" width="522.2" height="304.4" fill="#454545"/>
<g stroke="#4c9ea6" stroke-width="1.2" fill="none"><line x1="20.8" y1="145.6" x2="600" y2="145.6"/><line x1="20.8" y1="190.4" x2="600" y2="190.4"/><line x1="247.1" y1="47.5" x2="247.1" y2="414"/><line x1="369.4" y1="47.5" x2="369.4" y2="414"/><line x1="476.8" y1="47.5" x2="476.8" y2="414"/></g>
<line x1="20.8" y1="326.5" x2="600" y2="326.5" stroke="#5570a8" stroke-width="1.2"/>
<rect x="60.7" y="107.7" width="520.9" height="303.1" fill="#ffffff"/>
<g stroke="#c3eff7" stroke-width="1.1" fill="none"><line x1="60.7" y1="145.6" x2="581.6" y2="145.6"/><line x1="60.7" y1="190.4" x2="581.6" y2="190.4"/><line x1="247.1" y1="107.7" x2="247.1" y2="410.8"/><line x1="369.4" y1="107.7" x2="369.4" y2="410.8"/><line x1="476.8" y1="107.7" x2="476.8" y2="410.8"/></g>
<line x1="60.7" y1="326.5" x2="581.6" y2="326.5" stroke="#c4d0f9" stroke-width="1.1"/>
<g stroke="#555555" stroke-width="1" fill="none">
  <rect x="109.1" y="153" width="100.2" height="27.9"/>
  <rect x="218.1" y="196.8" width="80.4" height="39" rx="6" ry="6"/>
  <ellipse cx="156.7" cy="253.1" rx="50.8" ry="22.6"/>
  <circle cx="375.5" cy="258.8" r="8"/>
  <circle cx="470" cy="238.8" r="8"/>
  <circle cx="533.7" cy="224.5" r="8"/>
  <ellipse cx="376.5" cy="288" rx="49.8" ry="8.6"/>
  <ellipse cx="376.5" cy="313.7" rx="49.8" ry="8.4"/>
  <path d="M326.8 288V313.7M426.2 288V313.7" stroke="#777" stroke-width="0.9"/>
 </g>
</svg>
</body>
</html>
